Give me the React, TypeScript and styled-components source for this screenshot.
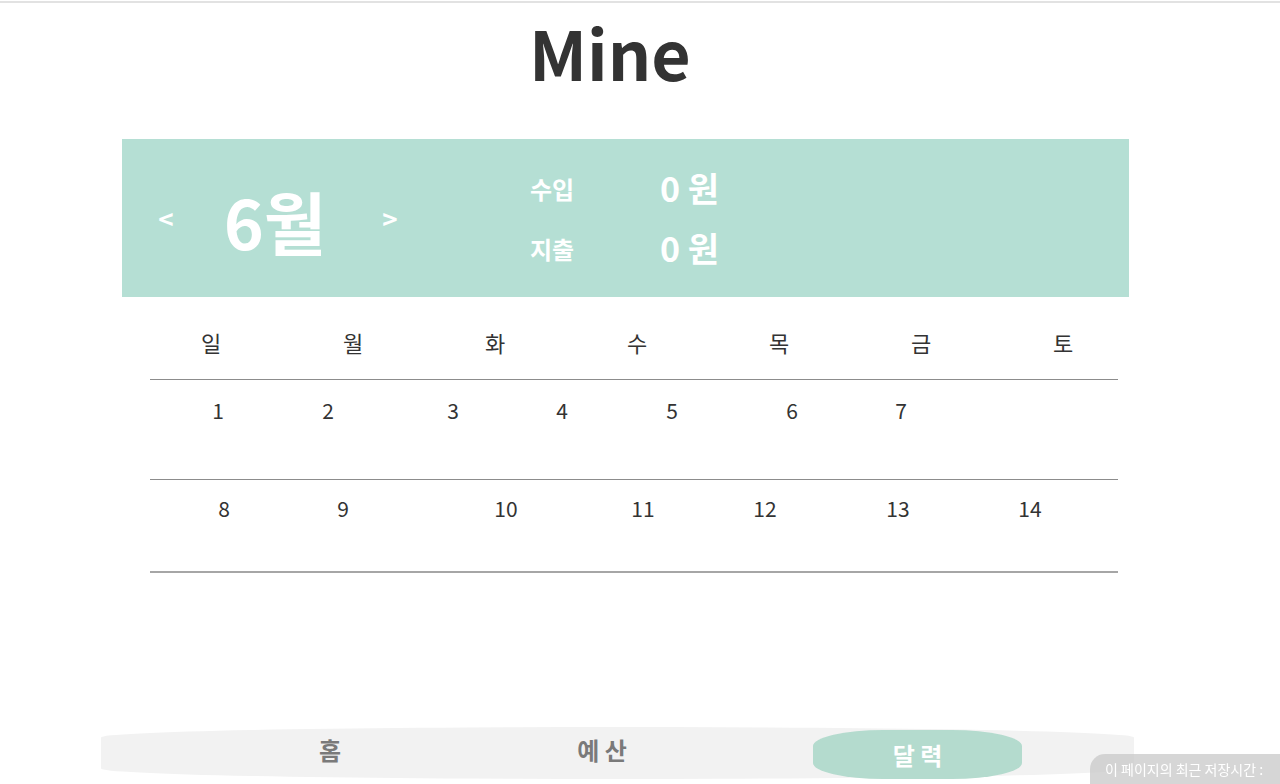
import React from 'react';
import styled, { createGlobalStyle } from 'styled-components';

const GlobalStyle = createGlobalStyle`
  * {
    box-sizing: border-box;
  }
  body {
    margin: 0;
    background: #fff;
    font-family: 'Noto Sans CJK KR', 'Noto Sans', sans-serif;
    color: #333;
  }
`;

const WEEKDAYS = ['일', '월', '화', '수', '목', '금', '토'];

const WEEKS = [
  {
    days: [1, 2, 3, 4, 5, 6, 7],
    cols: '136px 84px 166px 52px 168px 72px 146px',
    pad: 15,
    height: 100,
  },
  {
    days: [8, 9, 10, 11, 12, 13, 14],
    cols: '148px 90px 236px 38px 206px 60px 204px',
    pad: 13,
    height: 93,
  },
];

const App = () => {
  return (
    <Page>
      <GlobalStyle />
      <TopLine />
      <Title>Mine</Title>

      <Summary>
        <MonthNav>
          <Arrow>&lt;</Arrow>
          <Month>6월</Month>
          <Arrow $next>&gt;</Arrow>
        </MonthNav>
        <Totals>
          <TotalLabel>수입</TotalLabel>
          <TotalValue>0 원</TotalValue>
          <TotalLabel>지출</TotalLabel>
          <TotalValue>0 원</TotalValue>
        </Totals>
      </Summary>

      <Calendar>
        <WeekHeader>
          <WeekHeaderGrid>
            {WEEKDAYS.map((d) => (
              <WeekdayCell key={d}>{d}</WeekdayCell>
            ))}
          </WeekHeaderGrid>
        </WeekHeader>
        {WEEKS.map((week, idx) => (
          <WeekRow
            key={idx}
            $cols={week.cols}
            $pad={week.pad}
            $height={week.height}
            $last={idx === WEEKS.length - 1}
          >
            {week.days.map((day) => (
              <DayCell key={day}>{day}</DayCell>
            ))}
          </WeekRow>
        ))}
      </Calendar>

      <NavBar>
        <Tab $width={200}>홈</Tab>
        <Tab $width={344}>예 산</Tab>
        <ActiveTab>달 력</ActiveTab>
      </NavBar>

      <SaveNotice>이 페이지의 최근 저장시간 :</SaveNotice>
    </Page>
  );
};

export default App;

const Page = styled.div`
  width: 1280px;
  min-height: 784px;
  position: relative;
`;

const TopLine = styled.div`
  height: 2px;
  margin-top: 1px;
  background: #e2e2e2;
`;

const Title = styled.h1`
  width: 1220px;
  margin: 0;
  text-align: center;
  font-size: 68px;
  font-weight: 700;
  line-height: 98px;
  color: #333;
`;

const Summary = styled.section`
  display: flex;
  align-items: center;
  width: 1007px;
  height: 158px;
  margin: 38px 0 0 122px;
  background: #b5dfd4;
  color: #fff;
`;

const MonthNav = styled.div`
  display: flex;
  align-items: center;
  padding-left: 24px;
`;

const Arrow = styled.span<{ $next?: boolean }>`
  width: 40px;
  margin-left: ${({ $next }) => ($next ? '6px' : '0')};
  text-align: center;
  font-size: 26px;
  font-weight: 700;
  line-height: 40px;
`;

const Month = styled.span`
  width: 178px;
  text-align: center;
  font-size: 68px;
  font-weight: 700;
  line-height: 90px;
  margin-top: 6px;
`;

const Totals = styled.div`
  display: grid;
  grid-template-columns: 60px auto;
  grid-auto-rows: 60px;
  column-gap: 78px;
  align-items: center;
  margin-left: 112px;
`;

const TotalLabel = styled.span`
  text-align: center;
  font-size: 24px;
  font-weight: 700;
  line-height: 30px;
  margin-top: 2px;
`;

const TotalValue = styled.span`
  font-size: 34px;
  font-weight: 700;
  line-height: 44px;
`;

const Calendar = styled.section`
  width: 968px;
  margin-left: 150px;
`;

const WeekHeader = styled.div`
  padding: 27px 0 19px;
  border-bottom: 1px solid #8c8c8c;
`;

const WeekHeaderGrid = styled.div`
  display: grid;
  grid-template-columns: repeat(7, 142px);
  margin-left: -10px;
  width: 994px;
`;

const WeekdayCell = styled.span`
  text-align: center;
  font-size: 22px;
  font-weight: 400;
  line-height: 36px;
  color: #333;
`;

const WeekRow = styled.div<{ $cols: string; $pad: number; $height: number; $last: boolean }>`
  display: grid;
  grid-template-columns: ${({ $cols }) => $cols};
  align-items: start;
  height: ${({ $height }) => $height}px;
  padding-top: ${({ $pad }) => $pad}px;
  border-bottom: ${({ $last }) => ($last ? '2px solid #a6a6a6' : '1px solid #8c8c8c')};
`;

const DayCell = styled.span`
  text-align: center;
  font-size: 21px;
  font-weight: 400;
  line-height: 30px;
  color: #333;
`;

const NavBar = styled.nav`
  display: flex;
  align-items: center;
  width: 1033px;
  height: 52px;
  margin: 154px 0 0 101px;
  padding-left: 129px;
  background: #f2f2f2;
  border-radius: 50% / 20%;
`;

const Tab = styled.span<{ $width: number }>`
  width: ${({ $width }) => $width}px;
  text-align: center;
  font-size: 24px;
  font-weight: 700;
  line-height: 34px;
  color: #7a7a7a;
  margin-top: -6px;
`;

const ActiveTab = styled.span`
  display: flex;
  align-items: center;
  justify-content: center;
  width: 209px;
  height: 49px;
  margin: 2px 0 0 39px;
  background: #b4dbce;
  border-radius: 70px / 16px;
  font-size: 24px;
  font-weight: 700;
  color: #fff;
`;

const SaveNotice = styled.div`
  position: fixed;
  right: 0;
  bottom: 0;
  width: 190px;
  height: 30px;
  padding-left: 15px;
  background: rgba(200, 200, 200, 0.75);
  border-top-left-radius: 15px;
  color: #fff;
  font-size: 14px;
  line-height: 30px;
  white-space: nowrap;
  overflow: hidden;
`;
